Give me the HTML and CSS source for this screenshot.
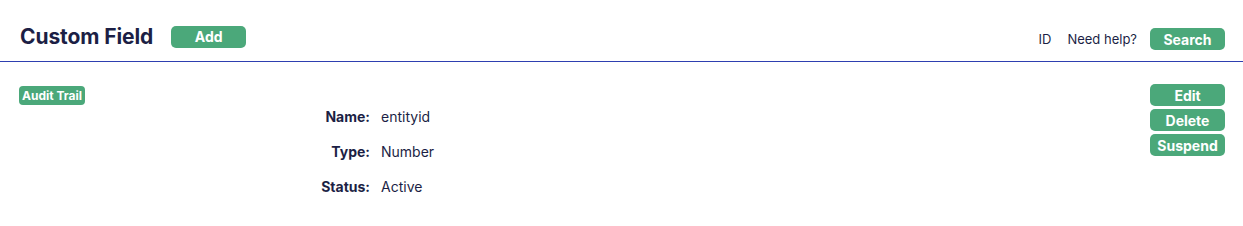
FILE: index.html
```html
<!DOCTYPE html>
<html lang="en">
<head>
    <meta charset="UTF-8">
    <meta name="viewport" content="width=device-width, initial-scale=1.0">
    <title>Custom Field</title>
    <link rel="stylesheet" href="styles.css">
</head>
<body>
    <div class="card">
        <!-- Header -->
        <div class="header">
            <div class="header-left">
                <h1>Custom Field</h1>
                <button class="btn">Add</button>
            </div>
            <div class="header-right">
                <span class="lang">ID</span>
                <span class="help">Need help?</span>
                <button class="btn">Search</button>
            </div>
        </div>

        <!-- Detail -->
        <div class="content">
            <div class="side">
                <button class="btn btn-small">Audit Trail</button>
            </div>
            <div class="fields">
                <span class="label">Name:</span><span class="value">entityid</span>
                <span class="label">Type:</span><span class="value">Number</span>
                <span class="label">Status:</span><span class="value">Active</span>
            </div>
            <div class="actions">
                <button class="btn">Edit</button>
                <button class="btn">Delete</button>
                <button class="btn">Suspend</button>
            </div>
        </div>
    </div>
</body>
</html>
```

FILE: styles.css
```css
* {
    margin: 0;
    padding: 0;
    box-sizing: border-box;
    font-family: Inter, "Noto Sans", sans-serif;
}

body {
    background-color: #fff;
    color: #1c1f45;
}

.card {
    background-color: #fff;
    min-height: 100vh;
    border-radius: 6px;
}

.header {
    display: flex;
    justify-content: space-between;
    align-items: flex-start;
    height: 62px;
    padding: 24px 18px 0 20px;
    border-bottom: 1px solid #2e3fb0;
}

.header-left {
    display: flex;
    align-items: center;
    gap: 18px;
}

.header h1 {
    font-size: 21px;
    font-weight: 700;
    color: #1c1f45;
    letter-spacing: -0.1px;
}

.header-right {
    display: flex;
    align-items: center;
    margin-top: 4px;
    font-size: 13px;
}

.lang {
    margin-right: 16px;
}

.help {
    margin-right: 13px;
}

.btn {
    width: 75px;
    height: 22px;
    border: none;
    border-radius: 5px;
    background-color: #4ba87a;
    color: #fff;
    font-size: 14px;
    font-weight: 700;
    cursor: pointer;
}

.btn-small {
    width: 66px;
    height: 19px;
    font-size: 12px;
    border-radius: 4px;
}

.content {
    display: flex;
    padding: 22px 18px 0 19px;
}

.side {
    width: 271px;
}

.fields {
    display: grid;
    grid-template-columns: 80px auto;
    grid-auto-rows: 35px;
    column-gap: 11px;
    align-items: center;
    margin-top: 15px;
    font-size: 14px;
}

.label {
    text-align: right;
    font-weight: 700;
}

.actions {
    margin-left: auto;
    display: flex;
    flex-direction: column;
    gap: 3px;
}
```
